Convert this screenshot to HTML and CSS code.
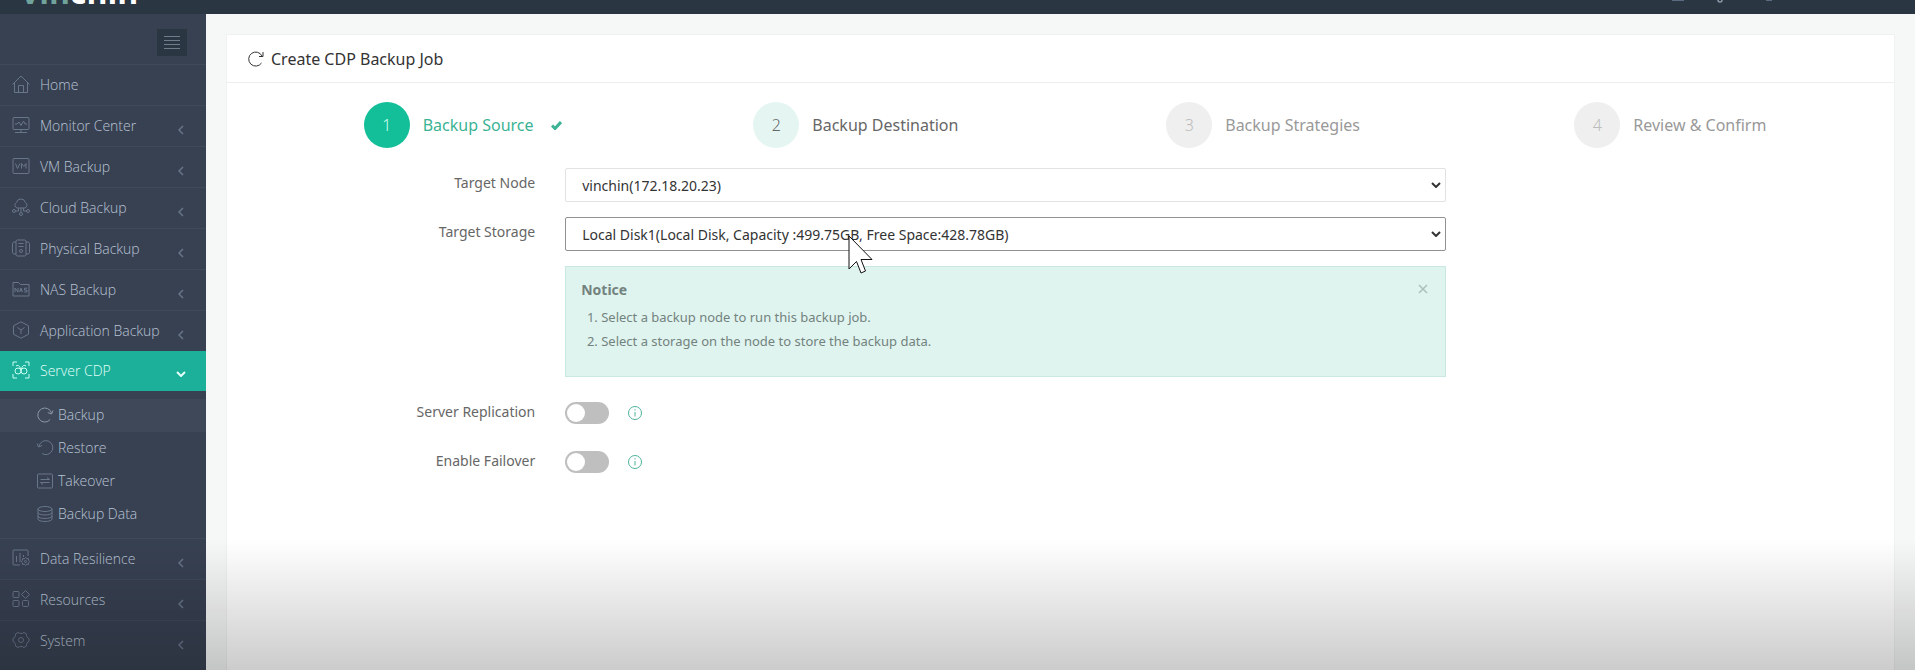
FILE: index.html
```html
<!DOCTYPE html>
<html lang="en">
<head>
    <meta charset="UTF-8">
    <meta name="viewport" content="width=device-width, initial-scale=1.0">
    <title>Create CDP Backup Job</title>
    <link rel="stylesheet" href="styles.css">
</head>
<body>
    <header class="topbar">
        <div class="brand"><span>vin</span>chin</div>
        <svg class="top-icons" viewBox="0 0 130 14">
            <path d="M4 0h12" stroke="#5b6b80" stroke-width="2"/>
            <path d="M50 0a2 2 0 0 0 4 0" stroke="#8a97a8" fill="none" stroke-width="1.5"/>
            <path d="M98 0h6" stroke="#5b6b80" stroke-width="2"/>
        </svg>
    </header>
    <div class="layout">
        <nav class="sidebar">
            <div class="toggler-row">
                <button type="button" class="toggler" aria-label="Toggle menu">
                    <svg width="16" height="14" viewBox="0 0 16 14"><path d="M0 .5h16M0 4.500h16M0 8.500h16M0 12.500h16"/></svg>
                </button>
            </div>
            <ul class="menu">
                <li><a href="#">
                    <svg class="icon" viewBox="0 0 18 18"><path d="M.5 9.500 9 1l8.500 8.500M2.500 8v9.500h13V8M6.500 17.500v-7h5v7"/></svg>
                    <span>Home</span>
                </a></li>
                <li><a href="#">
                    <svg class="icon" viewBox="0 0 18 18"><rect x="1" y="1.500" width="16" height="12" rx="1"/><path d="M3 8h2l2-2 2 3.500L11.500 5l1.500 3h2M9 13.500v3M3 16.500h12"/></svg>
                    <span>Monitor Center</span>
                    <svg class="arrow" viewBox="0 0 6 10"><path d="M5 1 1 5l4 4"/></svg>
                </a></li>
                <li><a href="#">
                    <svg class="icon" viewBox="0 0 18 18"><rect x="1" y="1.500" width="16" height="15" rx="1"/><path d="m3.500 6.500 2 5 2.500-5M9.500 11.500v-5l2.300 3 2.200-3v5"/></svg>
                    <span>VM Backup</span>
                    <svg class="arrow" viewBox="0 0 6 10"><path d="M5 1 1 5l4 4"/></svg>
                </a></li>
                <li><a href="#">
                    <svg class="icon" viewBox="0 0 18 18"><path d="M5 10a3 3 0 0 1-.5-5.500 4.500 4.500 0 0 1 8.800 0A3 3 0 0 1 13 10H5M9 10v4.500M6.500 10v3h-3M11.500 10v3h3"/><circle cx="2" cy="13" r="1.500"/><circle cx="16" cy="13" r="1.500"/><circle cx="9" cy="16" r="1.500"/></svg>
                    <span>Cloud Backup</span>
                    <svg class="arrow" viewBox="0 0 6 10"><path d="M5 1 1 5l4 4"/></svg>
                </a></li>
                <li><a href="#">
                    <svg class="icon" viewBox="0 0 18 18"><rect x="4" y="1" width="10" height="16" rx="1.500"/><path d="M4 3H1.500L.5 4.500v9l1 1.500H4M14 3h2.500l1 1.500v9l-1 1.500H14M6.500 4.500h5M6.500 7.500h5"/><circle cx="9" cy="12" r="1.500"/></svg>
                    <span>Physical Backup</span>
                    <svg class="arrow" viewBox="0 0 6 10"><path d="M5 1 1 5l4 4"/></svg>
                </a></li>
                <li><a href="#">
                    <svg class="icon" viewBox="0 0 18 18"><path d="M1 16V2.500h5.500l2 2H17V16zM3 12V8l3 4V8M7.500 12 9 8l1.500 4M8 10.700h2M15 8.200h-2.500v1.900H15V12h-2.700"/></svg>
                    <span>NAS Backup</span>
                    <svg class="arrow" viewBox="0 0 6 10"><path d="M5 1 1 5l4 4"/></svg>
                </a></li>
                <li><a href="#">
                    <svg class="icon" viewBox="0 0 18 18"><path d="m9 .8 7.500 4v8.400l-7.500 4-7.500-4V4.800zM5.500 6.500 9 9l3.500-2.500M9 9v4"/></svg>
                    <span>Application Backup</span>
                    <svg class="arrow" viewBox="0 0 6 10"><path d="M5 1 1 5l4 4"/></svg>
                </a></li>
                <li class="open"><a href="#">
                    <svg class="icon" viewBox="0 0 18 18"><path d="M1 5V1h4M13 1h4v4M17 13v4h-4M5 17H1v-4"/><circle cx="6" cy="10" r="3"/><circle cx="12" cy="10" r="3"/><path d="M4 5c3-2 4 1 5 4M14 5c-3-2-4 1-5 4"/></svg>
                    <span>Server CDP</span>
                    <svg class="arrow-down" viewBox="0 0 10 6"><path d="m1 1 4 4 4-4"/></svg>
                </a>
                    <ul class="submenu">
                        <li class="current"><a href="#">
                            <svg class="icon" viewBox="0 0 18 18"><path d="M14.200 13.500a7 7 0 1 1 1.300-6.500M17 4.500 15.600 8l-3.800-1.400"/></svg>
                            <span>Backup</span>
                        </a></li>
                        <li><a href="#">
                            <svg class="icon" viewBox="0 0 18 18"><path d="M6 14.500A7 7 0 1 0 3 7M1 4.500 2.600 8l3.600-1.500"/></svg>
                            <span>Restore</span>
                        </a></li>
                        <li><a href="#">
                            <svg class="icon" viewBox="0 0 18 18"><rect x="1.500" y="2" width="15" height="14" rx="1"/><path d="M4.500 7.500h9l-2.500-2M13.500 10.500h-9l2.500 2"/></svg>
                            <span>Takeover</span>
                        </a></li>
                        <li><a href="#">
                            <svg class="icon" viewBox="0 0 18 18"><ellipse cx="9" cy="4" rx="7" ry="2.500"/><path d="M2 4v10c0 3.300 14 3.300 14 0V4M2 7.500c0 3.300 14 3.300 14 0M2 11c0 3.300 14 3.300 14 0"/></svg>
                            <span>Backup Data</span>
                        </a></li>
                    </ul>
                </li>
                <li><a href="#">
                    <svg class="icon" viewBox="0 0 18 18"><path d="M8 16H2a1 1 0 0 1-1-1V2a1 1 0 0 1 1-1h13a1 1 0 0 1 1 1v5M4.500 7v6M8 4v9M11.500 6v2"/><path d="m13.500 8.500 1.200 1.300 1.800-.2.100 1.700 1.200 1.200-1.200 1.200-.1 1.700-1.800-.2-1.200 1.300-1.200-1.300-1.800.2-.1-1.700-1.200-1.200 1.200-1.200.1-1.700 1.800.2z"/><circle cx="13.500" cy="12.500" r="1"/></svg>
                    <span>Data Resilience</span>
                    <svg class="arrow" viewBox="0 0 6 10"><path d="M5 1 1 5l4 4"/></svg>
                </a></li>
                <li><a href="#">
                    <svg class="icon" viewBox="0 0 18 18"><rect x="1" y="1.500" width="6" height="6" rx="1"/><rect x="1" y="10.500" width="6" height="6" rx="1"/><rect x="10.500" y="10.500" width="6" height="6" rx="1"/><path d="m13.500.5 4 4-4 4-4-4z"/></svg>
                    <span>Resources</span>
                    <svg class="arrow" viewBox="0 0 6 10"><path d="M5 1 1 5l4 4"/></svg>
                </a></li>
                <li><a href="#">
                    <svg class="icon" viewBox="0 0 18 18"><path d="M6 1.500c1.500 1.300 4.500 1.300 6 0l2.500 1.500c-.3 2 .8 4 2.500 4.500v3c-1.700.5-2.800 2.500-2.500 4.500L12 16.500c-1.500-1.300-4.500-1.300-6 0L3.500 15c.3-2-.8-4-2.500-4.500v-3C2.700 7 3.800 5 3.500 3z"/><circle cx="9" cy="9" r="2.500"/></svg>
                    <span>System</span>
                    <svg class="arrow" viewBox="0 0 6 10"><path d="M5 1 1 5l4 4"/></svg>
                </a></li>
            </ul>
        </nav>
        <main class="content">
            <section class="panel">
                <div class="panel-head">
                    <svg class="icon" viewBox="0 0 18 18"><path d="M14.500 13a7 7 0 1 1 .5-7M16 2v4.500h-4"/></svg>
                    <h1>Create CDP Backup Job</h1>
                </div>
                <ol class="steps">
                    <li class="step active">
                        <span class="number">1</span><span class="desc">Backup Source</span>
                        <svg class="check" viewBox="0 0 11 9"><path d="m1 4.500 3 3L10 1"/></svg>
                    </li>
                    <li class="step next">
                        <span class="number">2</span><span class="desc">Backup Destination</span>
                        <svg class="check" viewBox="0 0 11 9"><path d="m1 4.500 3 3L10 1"/></svg>
                    </li>
                    <li class="step">
                        <span class="number">3</span><span class="desc">Backup Strategies</span>
                        <svg class="check" viewBox="0 0 11 9"><path d="m1 4.500 3 3L10 1"/></svg>
                    </li>
                    <li class="step">
                        <span class="number">4</span><span class="desc">Review &amp; Confirm</span>
                        <svg class="check" viewBox="0 0 11 9"><path d="m1 4.500 3 3L10 1"/></svg>
                    </li>
                </ol>
                <form class="job-form">
                    <div class="row">
                        <label for="target_node">Target Node</label>
                        <div class="select-wrap">
                            <select id="target_node" name="target_node">
                                <option>vinchin(172.18.20.23)</option>
                            </select>
                            <svg class="caret" viewBox="0 0 10 6"><path d="m1 1 4 4 4-4"/></svg>
                        </div>
                    </div>
                    <div class="row">
                        <label for="target_storage">Target Storage</label>
                        <div class="select-wrap">
                            <select id="target_storage" name="target_storage" class="focused">
                                <option>Local Disk1(Local Disk, Capacity :499.75GB, Free Space:428.78GB)</option>
                            </select>
                            <svg class="caret" viewBox="0 0 10 6"><path d="m1 1 4 4 4-4"/></svg>
                        </div>
                    </div>
                    <div class="row">
                        <div class="notice">
                            <div class="notice-head">
                                <h2>Notice</h2>
                                <button type="button" class="close" aria-label="Close">
                                    <svg width="10" height="10" viewBox="0 0 10 10"><path d="m1 1 8 8M9 1 1 9"/></svg>
                                </button>
                            </div>
                            <ol>
                                <li>Select a backup node to run this backup job.</li>
                                <li>Select a storage on the node to store the backup data.</li>
                            </ol>
                        </div>
                    </div>
                    <div class="row switch-row">
                        <label for="server_replication">Server Replication</label>
                        <div class="switch-wrap">
                            <input type="checkbox" id="server_replication" class="switch">
                            <svg class="info" viewBox="0 0 16 16"><circle cx="8" cy="8" r="6.500"/><path d="M8 7v4.500M8 4.200v1.300"/></svg>
                        </div>
                    </div>
                    <div class="row switch-row">
                        <label for="enable_failover">Enable Failover</label>
                        <div class="switch-wrap">
                            <input type="checkbox" id="enable_failover" class="switch">
                            <svg class="info" viewBox="0 0 16 16"><circle cx="8" cy="8" r="6.500"/><path d="M8 7v4.500M8 4.200v1.300"/></svg>
                        </div>
                    </div>
                </form>
            </section>
        </main>
    </div>
    <div class="shade"></div>
    <svg class="cursor" viewBox="0 0 26 40"><path d="M1 1v33l7.500-7.500 4.500 11.500 4.500-2-4.500-11.500H24z"/></svg>
</body>
</html>
```
FILE: styles.css
```css
* {
    box-sizing: border-box;
}
body {
    margin: 0;
    height: 100vh;
    overflow: hidden;
    display: flex;
    flex-direction: column;
    font-family: "Noto Sans", "Open Sans", sans-serif;
    font-size: 14px;
    color: #666;
    background: #f6f7f7;
}
ul, ol {
    margin: 0;
    padding: 0;
    list-style: none;
}
a {
    color: inherit;
    text-decoration: none;
}
svg {
    flex: none;
    fill: none;
    stroke: currentColor;
}
.topbar {
    flex: none;
    height: 14px;
    padding: 0 117px 0 21px;
    display: flex;
    justify-content: space-between;
    align-items: flex-end;
    overflow: hidden;
    background: #2b3643;
}
.brand {
    padding-bottom: 6px;
    font-family: "Open Sans", sans-serif;
    font-size: 32px;
    font-weight: 700;
    line-height: 32px;
    color: #fff;
}
.brand span {
    color: #6fa39c;
}
.top-icons {
    width: 130px;
    height: 14px;
}
.layout {
    flex: 1;
    min-height: 0;
    display: flex;
}

/* sidebar */
.sidebar {
    width: 206px;
    flex: none;
    background: #384152;
    color: #b9c4d5;
    font-family: "Open Sans", "Noto Sans", sans-serif;
    font-weight: 300;
}
.toggler-row {
    height: 50px;
    padding: 15px 19px 0 0;
    display: flex;
    justify-content: flex-end;
    align-items: flex-start;
}
.toggler {
    width: 30px;
    height: 27px;
    padding: 0;
    border: none;
    background: #2b3643;
    color: #707b8b;
    display: flex;
    align-items: center;
    justify-content: center;
}
.menu > li > a {
    height: 41px;
    padding: 0 20px 2px 12px;
    display: flex;
    align-items: center;
    border-top: 1px solid #3f4959;
}
.menu .icon {
    width: 18px;
    height: 18px;
    margin-right: 10px;
    color: #68768a;
}
.arrow {
    width: 6px;
    height: 10px;
    margin: 9px 2px 0 auto;
    color: #68768a;
    stroke-width: 1.5;
}
.arrow-down {
    width: 10px;
    height: 6px;
    margin: 8px 0 0 auto;
    stroke-width: 2;
}
.menu > .open > a {
    height: 40px;
    border-top: none;
    background: #1caf9a;
    color: #e4fff9;
}
.menu > .open > a .icon {
    color: #c9fff2;
}
.submenu {
    padding: 8px 0 7px;
}
.submenu a {
    height: 33px;
    padding: 0 0 2px 36px;
    display: flex;
    align-items: center;
}
.submenu .icon {
    margin-right: 4px;
}
.submenu .current a {
    background: #3e4859;
}
.submenu .current .icon {
    color: #8b98aa;
}

/* main panel */
.content {
    flex: 1;
    min-width: 0;
    padding: 20px 20px 0;
    display: flex;
}
.panel {
    flex: 1;
    min-width: 0;
    background: #fff;
    border: 1px solid #f0f1f1;
    border-bottom: none;
}
.panel-head {
    height: 48px;
    padding: 0 20px;
    display: flex;
    align-items: center;
    gap: 6px;
    border-bottom: 1px solid #eee;
    color: #333;
}
.panel-head .icon {
    width: 18px;
    height: 18px;
}
h1 {
    margin: 0;
    font-size: 16px;
    font-weight: 400;
}
.steps {
    display: grid;
    grid-template-columns: repeat(4, 1fr);
    padding: 19px 6px 20px 32px;
}
.step {
    display: flex;
    align-items: center;
    justify-content: center;
    font-size: 16px;
    color: #999;
}
.number {
    width: 46px;
    height: 46px;
    margin-right: 13px;
    border-radius: 50%;
    display: flex;
    align-items: center;
    justify-content: center;
    font-weight: 300;
    background: #efefef;
    color: #bbb;
}
.check {
    width: 11px;
    height: 9px;
    margin-left: 17px;
    stroke-width: 3;
    visibility: hidden;
}
.step.active {
    color: #3bb394;
}
.active .number {
    background: #12bf98;
    color: #d5fff4;
}
.active .check {
    visibility: visible;
}
.step.next {
    color: #666;
}
.next .number {
    background: #e5f6f2;
    color: #666;
}

/* form */
.row {
    display: grid;
    grid-template-columns: 14fr 40fr 19fr;
    column-gap: 30px;
    margin-bottom: 15px;
}
.row label {
    padding-top: 5px;
    line-height: 20px;
    text-align: right;
}
.select-wrap {
    position: relative;
}
select {
    display: block;
    width: 100%;
    height: 34px;
    padding: 0 24px 0 16px;
    border: 1px solid #e2e2e2;
    border-radius: 2px;
    background: #fff;
    color: #333;
    font: inherit;
    appearance: none;
}
select.focused {
    border-color: #919191;
}
.caret {
    position: absolute;
    right: 5px;
    top: 14px;
    width: 10px;
    height: 6px;
    color: #333;
    stroke-width: 2;
    pointer-events: none;
}
.notice {
    grid-column: 2;
    padding: 10px 17px 23px 15px;
    background: #dff4ef;
    border: 1px solid #c8e8e1;
    color: #73827e;
}
.notice-head {
    display: flex;
    align-items: center;
    justify-content: space-between;
    height: 24px;
    margin-bottom: 4px;
}
h2 {
    margin: 0;
    font-size: 14px;
    font-weight: 700;
}
.close {
    padding: 0;
    border: none;
    background: none;
    color: #a9c0bb;
    display: flex;
    stroke-width: 1.5;
}
.notice ol {
    padding-left: 20px;
    list-style: decimal;
    font-size: 13px;
    line-height: 24px;
}
.switch-row {
    margin: 25px 0 27px;
}
.switch-row label {
    padding-top: 0;
}
.switch-wrap {
    display: flex;
    align-items: center;
    gap: 18px;
}
.switch {
    appearance: none;
    width: 44px;
    height: 22px;
    margin: 0;
    padding: 2px;
    border-radius: 11px;
    background: #bfbfbf;
}
.switch::before {
    content: "";
    display: block;
    width: 18px;
    height: 18px;
    border-radius: 50%;
    background: #fff;
}
.info {
    width: 16px;
    height: 16px;
    color: #4fb39b;
}

.shade {
    position: fixed;
    left: 0;
    right: 0;
    bottom: 0;
    height: 130px;
    background: linear-gradient(rgba(0, 0, 0, 0), rgba(0, 0, 0, 0.2));
    pointer-events: none;
}
.cursor {
    position: fixed;
    left: 848px;
    top: 235px;
    width: 26px;
    height: 40px;
    fill: #fff;
    stroke: #111;
    pointer-events: none;
}
```
